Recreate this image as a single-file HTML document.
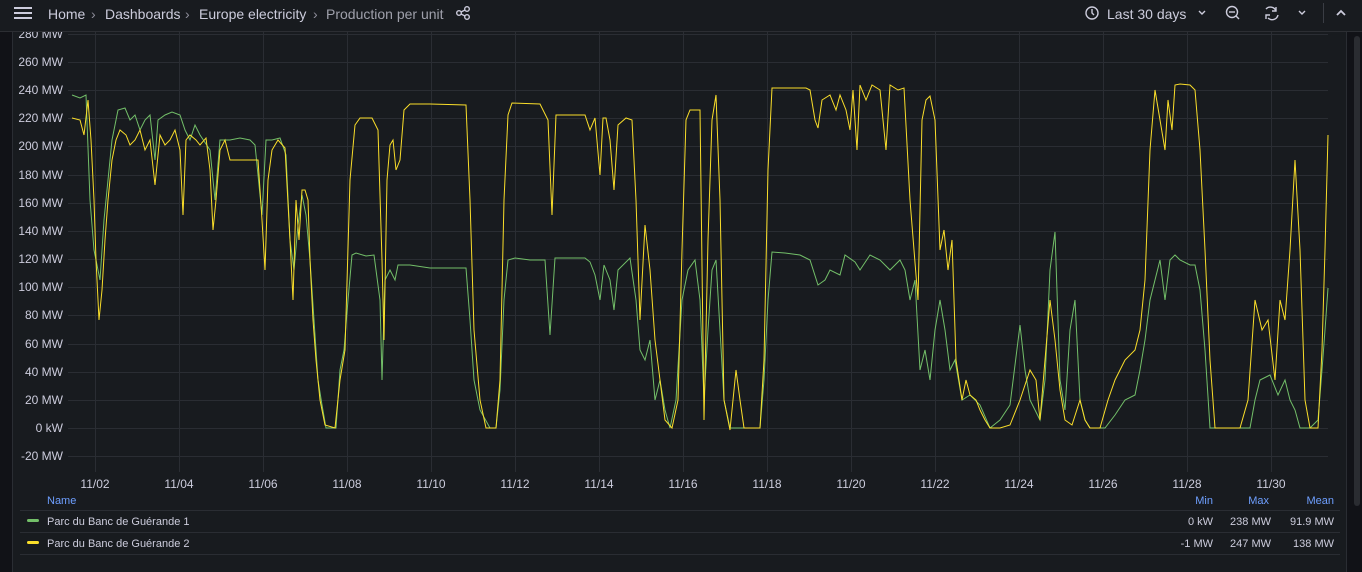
<!DOCTYPE html>
<html><head><meta charset="utf-8"><style>
*{margin:0;padding:0;box-sizing:border-box}
body{width:1362px;height:561px;overflow:hidden;background:#111217;font-family:"Liberation Sans",sans-serif;color:#ccccdc;position:relative}
.top{position:absolute;left:0;top:0;width:1362px;height:32px;background:#181b1f;border-bottom:1px solid #2c2e33;font-size:14px}
.top span{position:absolute;top:6px}
.panel{position:absolute;left:12px;top:32px;width:1335px;height:540px;background:#181b1f;border-left:1px solid #2a2d33;border-right:1px solid #2a2d33}
.sb{position:absolute;left:1354px;top:36px;width:6px;height:470px;background:#2a2c31;border-radius:3px}
svg{position:absolute;left:0;top:0}
</style></head><body>
<div class="panel"></div>
<div class="sb"></div>
<svg width="1362" height="561" font-family="Liberation Sans, sans-serif" font-size="12">
<g stroke="#2a2d33" stroke-width="1">
<line x1="68" x2="1328" y1="34.5" y2="34.5"/><line x1="68" x2="1328" y1="62.5" y2="62.5"/><line x1="68" x2="1328" y1="90.5" y2="90.5"/><line x1="68" x2="1328" y1="118.5" y2="118.5"/><line x1="68" x2="1328" y1="146.5" y2="146.5"/><line x1="68" x2="1328" y1="175.5" y2="175.5"/><line x1="68" x2="1328" y1="203.5" y2="203.5"/><line x1="68" x2="1328" y1="231.5" y2="231.5"/><line x1="68" x2="1328" y1="259.5" y2="259.5"/><line x1="68" x2="1328" y1="287.5" y2="287.5"/><line x1="68" x2="1328" y1="315.5" y2="315.5"/><line x1="68" x2="1328" y1="344.5" y2="344.5"/><line x1="68" x2="1328" y1="372.5" y2="372.5"/><line x1="68" x2="1328" y1="400.5" y2="400.5"/><line x1="68" x2="1328" y1="428.5" y2="428.5"/><line x1="68" x2="1328" y1="456.5" y2="456.5"/>
<line x1="95.5" x2="95.5" y1="32" y2="472"/><line x1="179.5" x2="179.5" y1="32" y2="472"/><line x1="263.5" x2="263.5" y1="32" y2="472"/><line x1="347.5" x2="347.5" y1="32" y2="472"/><line x1="431.5" x2="431.5" y1="32" y2="472"/><line x1="515.5" x2="515.5" y1="32" y2="472"/><line x1="599.5" x2="599.5" y1="32" y2="472"/><line x1="683.5" x2="683.5" y1="32" y2="472"/><line x1="767.5" x2="767.5" y1="32" y2="472"/><line x1="851.5" x2="851.5" y1="32" y2="472"/><line x1="935.5" x2="935.5" y1="32" y2="472"/><line x1="1019.5" x2="1019.5" y1="32" y2="472"/><line x1="1103.5" x2="1103.5" y1="32" y2="472"/><line x1="1187.5" x2="1187.5" y1="32" y2="472"/><line x1="1271.5" x2="1271.5" y1="32" y2="472"/>
</g>
<g fill="#ccccdc" text-anchor="end">
<text x="63" y="38">280 MW</text><text x="63" y="66">260 MW</text><text x="63" y="94">240 MW</text><text x="63" y="122">220 MW</text><text x="63" y="150">200 MW</text><text x="63" y="179">180 MW</text><text x="63" y="207">160 MW</text><text x="63" y="235">140 MW</text><text x="63" y="263">120 MW</text><text x="63" y="291">100 MW</text><text x="63" y="319">80 MW</text><text x="63" y="348">60 MW</text><text x="63" y="376">40 MW</text><text x="63" y="404">20 MW</text><text x="63" y="432">0 kW</text><text x="63" y="460">-20 MW</text>
</g>
<g fill="#ccccdc" text-anchor="middle">
<text x="95" y="488">11/02</text><text x="179" y="488">11/04</text><text x="263" y="488">11/06</text><text x="347" y="488">11/08</text><text x="431" y="488">11/10</text><text x="515" y="488">11/12</text><text x="599" y="488">11/14</text><text x="683" y="488">11/16</text><text x="767" y="488">11/18</text><text x="851" y="488">11/20</text><text x="935" y="488">11/22</text><text x="1019" y="488">11/24</text><text x="1103" y="488">11/26</text><text x="1187" y="488">11/28</text><text x="1271" y="488">11/30</text>
</g>
<polyline fill="none" stroke="#73bf69" stroke-width="1" points="72,95 80,98 86,95 90,200 94,250 100,280 104,220 108,180 112,140 118,110 125,108 130,120 135,115 140,130 145,120 150,115 155,160 158,120 165,115 172,112 180,115 185,130 190,140 195,125 200,135 210,150 215,200 220,140 230,140 240,138 250,140 255,145 262,215 266,140 272,140 280,138 286,155 290,240 294,270 298,225 302,195 306,215 310,260 314,320 318,380 322,405 326,428 336,428 340,370 344,350 348,300 352,255 356,253 366,256 374,255 380,300 382,380 385,280 390,270 395,280 398,265 410,265 430,268 466,268 470,320 474,380 480,410 490,428 496,428 500,390 504,300 508,260 515,258 530,260 545,260 550,335 555,258 585,258 590,262 595,275 600,300 604,265 610,280 614,310 618,270 630,258 636,300 640,350 645,360 650,340 655,400 660,380 665,410 670,428 676,400 682,300 688,270 695,260 700,300 704,400 708,330 712,270 716,260 720,330 724,400 730,428 760,428 764,380 768,300 772,252 785,253 800,255 810,260 818,285 825,280 830,270 840,275 845,255 855,262 860,270 870,255 880,260 890,270 900,260 905,270 910,300 915,280 920,370 925,350 930,380 935,330 940,300 945,330 950,370 955,360 962,400 970,395 980,405 990,428 1000,420 1010,405 1020,325 1025,370 1030,400 1040,420 1045,380 1050,270 1055,232 1060,380 1065,410 1070,330 1075,300 1080,400 1085,420 1090,428 1105,428 1115,415 1125,400 1135,395 1140,370 1145,340 1150,300 1155,280 1160,260 1165,300 1170,260 1175,255 1180,260 1190,265 1195,265 1200,290 1205,350 1210,428 1250,428 1255,400 1260,380 1270,375 1278,395 1285,380 1290,400 1295,410 1300,428 1310,428 1318,420 1322,370 1325,330 1328,288"/>
<polyline fill="none" stroke="#fade2a" stroke-width="1" points="72,118 80,120 84,135 88,100 91,140 94,200 96,260 99,320 102,290 105,240 108,200 112,160 116,140 120,130 126,135 130,145 135,140 140,130 145,150 150,140 155,185 160,135 165,145 170,140 175,130 180,150 183,215 186,140 190,135 196,140 200,145 206,138 210,170 213,230 216,200 220,150 225,140 230,160 240,160 250,160 258,160 262,220 265,270 268,180 272,150 278,140 285,148 290,240 293,300 296,200 299,240 302,190 305,190 308,200 310,260 313,320 316,360 320,400 325,425 335,428 340,380 345,350 350,180 355,125 360,118 372,118 378,130 382,260 384,340 387,180 390,145 393,140 396,170 400,160 404,110 410,104 430,104 466,105 470,200 474,330 480,400 486,428 496,428 500,380 504,200 508,115 512,103 540,104 548,120 552,215 556,115 585,115 590,130 595,118 600,175 603,118 606,118 610,140 614,190 618,125 626,118 632,120 636,200 640,320 645,225 650,270 655,340 660,380 665,420 672,428 678,400 682,250 686,120 690,110 700,110 704,420 708,240 712,120 716,95 720,200 724,400 730,430 736,370 740,400 744,428 760,428 764,360 768,170 772,88 780,88 806,88 810,90 815,120 818,128 822,100 830,95 836,110 840,95 846,110 850,130 853,90 857,150 860,85 866,100 872,85 880,90 886,150 890,85 898,90 904,88 910,200 914,250 918,300 922,120 926,100 930,96 935,120 940,250 944,230 948,270 952,240 956,360 962,400 966,380 970,395 976,400 980,410 985,420 990,428 1000,428 1010,425 1020,400 1030,370 1036,380 1040,420 1050,300 1055,340 1060,390 1065,420 1072,425 1080,400 1085,420 1090,428 1100,428 1108,400 1115,380 1125,360 1135,350 1140,330 1145,280 1150,150 1155,90 1160,120 1165,150 1168,100 1172,130 1175,85 1180,84 1190,85 1195,90 1200,150 1205,250 1210,360 1215,428 1240,428 1248,400 1255,300 1262,330 1268,320 1275,380 1280,300 1285,320 1290,250 1295,160 1300,250 1305,400 1310,428 1318,428 1322,350 1325,250 1328,135"/>
<g stroke="#2a2d33"><line x1="20" x2="1340" y1="510.5" y2="510.5"/><line x1="20" x2="1340" y1="532.5" y2="532.5"/><line x1="20" x2="1340" y1="554.5" y2="554.5"/></g>
<rect x="27" y="519" width="12" height="3" rx="1.5" fill="#73bf69"/>
<rect x="27" y="541" width="12" height="3" rx="1.5" fill="#fade2a"/>
<g fill="#6e9fff" font-size="11"><text x="47" y="504">Name</text><text x="1213" y="504" text-anchor="end">Min</text><text x="1269" y="504" text-anchor="end">Max</text><text x="1334" y="504" text-anchor="end">Mean</text></g>
<g fill="#ccccdc" font-size="11"><text x="47" y="525">Parc du Banc de Guérande 1</text><text x="47" y="547">Parc du Banc de Guérande 2</text>
<g text-anchor="end"><text x="1213" y="525">0 kW</text><text x="1271" y="525">238 MW</text><text x="1334" y="525">91.9 MW</text><text x="1213" y="547">-1 MW</text><text x="1271" y="547">247 MW</text><text x="1334" y="547">138 MW</text></g></g>
</svg>
<div class="top">
<svg width="1362" height="32" style="position:absolute;left:0;top:0">
<g stroke="#ccccdc" stroke-width="2"><line x1="14" x2="32" y1="8" y2="8"/><line x1="14" x2="32" y1="13" y2="13"/><line x1="14" x2="32" y1="18" y2="18"/></g>
<g fill="none" stroke="#ccccdc" stroke-width="1.4"><circle cx="459" cy="13" r="2.3"/><circle cx="467" cy="9" r="2.3"/><circle cx="467" cy="17" r="2.3"/><line x1="461" y1="12" x2="465" y2="10"/><line x1="461" y1="14" x2="465" y2="16"/>
<circle cx="1092" cy="13" r="6"/><path d="M1092 9v4l2 2"/>
<path d="M1199 11l3 3 3-3"/>
<circle cx="1232" cy="12" r="5.5"/><line x1="1229" y1="12" x2="1235" y2="12"/><line x1="1236" y1="16" x2="1239" y2="19"/>
<path d="M1266 9a6 6 0 0 1 10 2M1278 15a6 6 0 0 1-10 3M1276 7v4h-4M1266 19v-4h4"/>
<path d="M1299 11l3 3 3-3"/>
<path d="M1337 15l4-4 4 4" stroke-width="1.8"/></g>
<line x1="1323.5" x2="1323.5" y1="3" y2="23" stroke="#3a3d44"/>
</svg>
<span style="left:48px">Home</span><span style="left:91px;color:#8e8e9a">›</span>
<span style="left:105px">Dashboards</span><span style="left:185px;color:#8e8e9a">›</span>
<span style="left:199px">Europe electricity</span><span style="left:313px;color:#8e8e9a">›</span>
<span style="left:326px;color:#9fa0ab">Production per unit</span>
<span style="left:1107px">Last 30 days</span>
</div>
</body></html>
